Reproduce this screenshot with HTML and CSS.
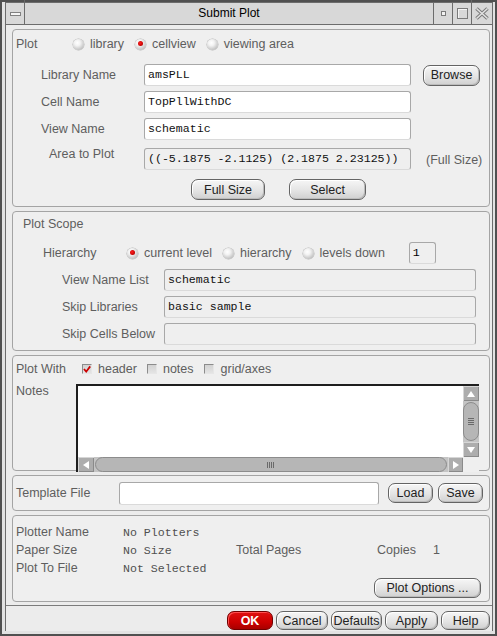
FILE: index.html
```html
<!DOCTYPE html>
<html>
<head>
<meta charset="utf-8">
<title>Submit Plot</title>
<link rel="stylesheet" href="styles.css">
</head>
<body>
<div class="window">
  <div class="frame">
    <div class="titlebar">
      <div class="tb-btn tb-menu"><span class="menu-bar"></span></div>
      <div class="title">Submit Plot</div>
      <div class="tb-btn tb-min"><span class="min-sq"></span></div>
      <div class="tb-btn tb-max"><span class="max-sq"></span></div>
      <div class="tb-btn tb-close">
        <svg width="14" height="13" viewBox="0 0 14 13">
          <path d="M1.5 1.5 L12.5 11.5 M12.5 1.5 L1.5 11.5" stroke="#7a7a7a" stroke-width="3.6" fill="none"/>
          <path d="M1.5 1.5 L12.5 11.5 M12.5 1.5 L1.5 11.5" stroke="#e2e2e2" stroke-width="1.6" fill="none"/>
        </svg>
      </div>
    </div>

    <div class="content">
      <section class="group g-plot">
        <div class="row plot-row">
          <span class="lbl w-plot">Plot</span>
          <span class="opt"><span class="radio"></span>library</span>
          <span class="opt"><span class="radio on"></span>cellview</span>
          <span class="opt"><span class="radio"></span>viewing area</span>
        </div>
        <div class="frow first">
          <span class="lbl flabel">Library Name</span>
          <div class="field f-main">amsPLL</div>
          <button class="btn browse">Browse</button>
        </div>
        <div class="frow">
          <span class="lbl flabel">Cell Name</span>
          <div class="field f-main">TopPllWithDC</div>
        </div>
        <div class="frow">
          <span class="lbl flabel">View Name</span>
          <div class="field f-main">schematic</div>
        </div>
        <div class="frow area-row">
          <span class="lbl flabel area-lbl">Area to Plot</span>
          <div class="field f-main ro">((-5.1875 -2.1125) (2.1875 2.23125))</div>
          <span class="lbl fullsize-note">(Full Size)</span>
        </div>
        <div class="btnrow">
          <button class="btn b-full">Full Size</button>
          <button class="btn b-select">Select</button>
        </div>
      </section>

      <section class="group g-scope">
        <div class="row scope-title"><span class="lbl">Plot Scope</span></div>
        <div class="row hier-row">
          <span class="lbl w-hier">Hierarchy</span>
          <span class="opt"><span class="radio on"></span>current level</span>
          <span class="opt"><span class="radio"></span>hierarchy</span>
          <span class="opt"><span class="radio"></span>levels down</span>
          <div class="field ro levels">1</div>
        </div>
        <div class="frow srow">
          <span class="lbl slabel">View Name List</span>
          <div class="field ro f-scope">schematic</div>
        </div>
        <div class="frow srow">
          <span class="lbl slabel">Skip Libraries</span>
          <div class="field ro f-scope">basic sample</div>
        </div>
        <div class="frow srow">
          <span class="lbl slabel">Skip Cells Below</span>
          <div class="field ro f-scope"></div>
        </div>
      </section>

      <section class="group g-with">
        <div class="row with-row">
          <span class="lbl w-with">Plot With</span>
          <span class="chk-opt"><span class="chk on"><svg width="10" height="9" viewBox="0 0 10 9"><path d="M1.2 3.8 L4 7.2 L9 0.6" stroke="#cc0000" stroke-width="2.2" fill="none"/></svg></span>header</span>
          <span class="chk-opt"><span class="chk"></span>notes</span>
          <span class="chk-opt"><span class="chk"></span>grid/axes</span>
        </div>
        <div class="notes-row">
          <span class="lbl w-notes">Notes</span>
          <div class="notes">
            <div class="notes-text"></div>
            <div class="vsb">
              <div class="arrow a-up"><span class="tri-up"></span></div>
              <div class="vthumb"><span class="vgrip"></span></div>
              <div class="arrow a-down"><span class="tri-down"></span></div>
            </div>
            <div class="hsb">
              <div class="arrow a-left"><span class="tri-left"></span></div>
              <div class="hthumb"><span class="hgrip"></span></div>
              <div class="arrow a-right"><span class="tri-right"></span></div>
            </div>
            <div class="corner"></div>
          </div>
        </div>
      </section>

      <section class="group g-tmpl">
        <span class="lbl w-tmpl">Template File</span>
        <div class="field f-tmpl"></div>
        <button class="btn b-load">Load</button>
        <button class="btn b-save">Save</button>
      </section>

      <section class="group g-info">
        <div class="info-grid">
          <span class="lbl">Plotter Name</span><span class="mono">No Plotters</span><span></span><span></span><span></span>
          <span class="lbl">Paper Size</span><span class="mono">No Size</span><span class="lbl">Total Pages</span><span class="lbl">Copies</span><span class="lbl">1</span>
          <span class="lbl">Plot To File</span><span class="mono">Not Selected</span><span></span><span></span><span></span>
        </div>
        <div class="opts-row"><button class="btn b-opts">Plot Options ...</button></div>
      </section>
    </div>

    <div class="buttonbar">
      <button class="btn b-ok">OK</button>
      <button class="btn b-cancel">Cancel</button>
      <button class="btn b-defaults">Defaults</button>
      <button class="btn b-apply">Apply</button>
      <button class="btn b-help">Help</button>
    </div>
  </div>
</div>
</body>
</html>
```

FILE: styles.css
```css
* { box-sizing: border-box; }
html, body { margin: 0; padding: 0; }
body {
  background: #e6e6e6;
  font-family: "Liberation Sans", Arial, sans-serif;
  font-size: 12.5px;
  color: #5e5e5e;
}

.window {
  position: relative;
  width: 497px;
  height: 636px;
  border: 2px solid #505050;
  padding: 0 2px 3px 3px;
  background: #e2e2e2;
}
.window::before, .window::after {
  content: "";
  position: absolute;
  top: -2px;
  width: 1px;
  height: 3px;
  background: #6a6a6a;
}
.window::before { left: 22px; }
.window::after { left: 469px; }

.frame {
  height: 100%;
  border: 1px solid #6c6c6c;
  border-bottom: none;
  display: flex;
  flex-direction: column;
  background: #ececec;
}

/* title bar */
.titlebar {
  height: 22px;
  display: flex;
  background: #d8d8d8;
  border-bottom: 1px solid #6c6c6c;
  flex: none;
}
.tb-btn {
  flex: none;
  display: flex;
  align-items: center;
  justify-content: center;
}
.tb-menu { width: 19px; border-right: 1px solid #6c6c6c; }
.menu-bar {
  width: 11px;
  height: 4px;
  background: #f4f4f4;
  border: 1px solid #808080;
}
.title {
  flex: 1;
  text-align: center;
  font-size: 12px;
  color: #000;
  line-height: 21px;
}
.tb-min { width: 19px; border-left: 1px solid #6c6c6c; }
.min-sq {
  width: 5px;
  height: 5px;
  border: 1px solid #7a7a7a;
  background: #f2f2f2;
}
.tb-max { width: 19px; border-left: 1px solid #6c6c6c; }
.max-sq {
  width: 11px;
  height: 11px;
  border: 1px solid #7a7a7a;
  box-shadow: inset 1px 1px 0 #f4f4f4;
}
.tb-close { width: 21px; border-left: 1px solid #6c6c6c; }

/* content */
.content {
  flex: 1;
  display: flex;
  flex-direction: column;
  gap: 4px;
  padding: 4px 2px 0 6px;
}
.group {
  flex: none;
  border: 1px solid #a4a4a4;
  border-radius: 4px;
  background: #efefef;
  padding-left: 3px;
}
.g-plot { height: 178px; padding-top: 4px; }
.g-scope { height: 140px; }
.g-with { height: 116px; padding-top: 3px; }
.g-tmpl { height: 36px; display: flex; align-items: center; }
.g-info { height: 87px; padding-top: 7px; }

.lbl { color: #5e5e5e; white-space: nowrap; }
.row { display: flex; align-items: center; height: 20px; }

/* radios & checkboxes */
.opt { display: flex; align-items: center; margin-right: 11px; white-space: nowrap; }
.radio {
  position: relative;
  width: 11px;
  height: 11px;
  border-radius: 50%;
  margin-right: 6px;
  background: radial-gradient(circle at 40% 35%, #ffffff 0, #f2f2f2 30%, #c6c6c6 70%, #a2a2a2 100%);
  box-shadow: 0 0 0 0.5px #b8b8b8;
}
.radio.on::after {
  content: "";
  position: absolute;
  left: 3px;
  top: 2.5px;
  width: 5px;
  height: 5px;
  border-radius: 50%;
  background: radial-gradient(circle at 40% 40%, #ff2020, #c00000 70%, #800000);
}
.chk-opt { display: flex; align-items: center; margin-right: 10px; white-space: nowrap; }
.chk {
  width: 10px;
  height: 10px;
  margin-right: 6px;
  border: 1px solid;
  border-color: #8c8c8c #e6e6e6 #e6e6e6 #8c8c8c;
  background: linear-gradient(#d2d2d2, #e4e4e4);
  display: flex;
  align-items: center;
  justify-content: center;
}
.chk svg { display: block; }
.chk-opt:nth-child(4) .chk { margin-right: 7px; }

/* fields */
.field {
  height: 22px;
  border: 1px solid #a8a8a8;
  border-bottom-color: #dadada;
  border-radius: 3px;
  background: #fff;
  font-family: "Liberation Mono", "Courier New", monospace;
  font-size: 11.6px;
  color: #111;
  padding: 0 3px;
  line-height: 20px;
  white-space: nowrap;
  overflow: hidden;
}
.field.ro { background: #efefef; }

/* buttons */
.btn {
  font-family: "Liberation Sans", Arial, sans-serif;
  font-size: 12.5px;
  color: #222;
  border: 1px solid #646464;
  border-radius: 7px;
  background: linear-gradient(#f6f6f6, #e4e4e4 55%, #d0d0d0);
  box-shadow: inset 1px 1px 0 #ffffff, inset -1px -1px 0 #bcbcbc;
  padding: 0;
  margin: 0;
  display: flex;
  align-items: center;
  justify-content: center;
  flex: none;
  white-space: nowrap;
}

/* section 1 */
.w-plot { width: 57px; }
.frow { display: flex; align-items: center; height: 22px; margin-top: 5px; }
.frow.first { margin-top: 10px; }
.flabel { width: 103px; margin-left: 25px; }
.f-main { width: 267px; }
.browse { width: 57px; height: 21px; margin-left: 12px; }
.area-row { margin-top: 8px; align-items: flex-start; }
.area-lbl { margin-left: 33px; width: 95px; line-height: 14px; margin-top: -1px; }
.fullsize-note { margin-left: 15px; line-height: 22px; margin-top: 1px; }
.btnrow { display: flex; margin-top: 9px; padding-left: 175px; gap: 24px; }
.b-full { width: 74px; height: 21px; }
.b-select { width: 77px; height: 21px; }

/* section 2 */
.scope-title { padding-left: 7px; margin-top: 2px; }
.hier-row { height: 22px; margin-top: 8px; }
.w-hier { width: 84px; margin-left: 27px; }
.levels { width: 27px; margin-left: 13px; color: #000; }
.srow { margin-top: 5px; }
.slabel { width: 102px; margin-left: 46px; }
.f-scope { width: 312px; }

/* section 3 */
.w-with { width: 66px; }
.notes-row { display: flex; margin-top: 5px; align-items: flex-start; }
.w-notes { width: 60px; line-height: 14px; }
.notes {
  width: 403px;
  height: 88px;
  border-top: 2px solid #1e1e1e;
  border-left: 2px solid #1e1e1e;
  background: #fff;
  display: grid;
  grid-template-columns: 1fr 16px;
  grid-template-rows: 1fr 15px;
}
.notes-text { background: #fff; }
.vsb {
  display: flex;
  flex-direction: column;
  background: #c4c4c4;
}
.hsb {
  display: flex;
  background: #c4c4c4;
  gap: 1px;
}
.corner { background: #efefef; }
.arrow {
  flex: none;
  background: #adadad;
  box-shadow: inset 1px 1px 0 #d6d6d6, inset -1px -1px 0 #8a8a8a;
  display: flex;
  align-items: center;
  justify-content: center;
}
.a-up { height: 15px; }
.a-down { height: 15px; }
.a-left { width: 16px; }
.a-right { width: 15px; }
.tri-up { border-left: 4px solid transparent; border-right: 4px solid transparent; border-bottom: 6px solid #fff; }
.tri-down { border-left: 4px solid transparent; border-right: 4px solid transparent; border-top: 6px solid #fff; }
.tri-left { border-top: 4px solid transparent; border-bottom: 4px solid transparent; border-right: 6px solid #fff; }
.tri-right { border-top: 4px solid transparent; border-bottom: 4px solid transparent; border-left: 6px solid #fff; }
.vthumb {
  flex: 1;
  margin: 1px 0;
  background: #b6b6b6;
  border: 1px solid #8c8c8c;
  border-radius: 8px;
  display: flex;
  align-items: center;
  justify-content: center;
}
.vgrip {
  width: 6px;
  height: 8px;
  background: repeating-linear-gradient(#6a6a6a 0 1px, transparent 1px 2px);
}
.hthumb {
  flex: 1;
  background: #b6b6b6;
  border: 1px solid #8c8c8c;
  border-radius: 8px;
  display: flex;
  align-items: center;
  justify-content: center;
}
.hgrip {
  width: 8px;
  height: 6px;
  background: repeating-linear-gradient(90deg, #6a6a6a 0 1px, transparent 1px 2px);
}

/* section 4 */
.w-tmpl { width: 103px; }
.f-tmpl { width: 260px; height: 23px; }
.b-load { width: 45px; height: 20px; margin-left: 9px; }
.b-save { width: 45px; height: 20px; margin-left: 5px; }

/* section 5 */
.info-grid {
  display: grid;
  grid-template-columns: 107px 113px 141px 56px 1fr;
  grid-auto-rows: 18px;
  align-items: center;
}
.mono {
  font-family: "Liberation Mono", "Courier New", monospace;
  font-size: 11.6px;
  color: #505050;
}
.opts-row { display: flex; justify-content: flex-end; padding-right: 8px; margin-top: 1px; }
.b-opts { width: 107px; height: 20px; }

/* bottom bar */
.buttonbar {
  flex: none;
  height: 26px;
  border-top: 1px solid #7c7c7c;
  display: flex;
  justify-content: flex-end;
  gap: 3px;
  padding: 5px 2px 0 0;
  background: #ececec;
}
.buttonbar .btn { height: 19px; }
.b-ok {
  width: 46px;
  background: linear-gradient(#e01010, #cc0000 60%, #a80000);
  border-color: #700000;
  box-shadow: inset 1px 1px 0 #ff5050;
  color: #fff;
  font-weight: bold;
}
.b-cancel { width: 52px; }
.b-defaults { width: 51px; }
.b-apply { width: 53px; }
.b-help { width: 49px; }
```
